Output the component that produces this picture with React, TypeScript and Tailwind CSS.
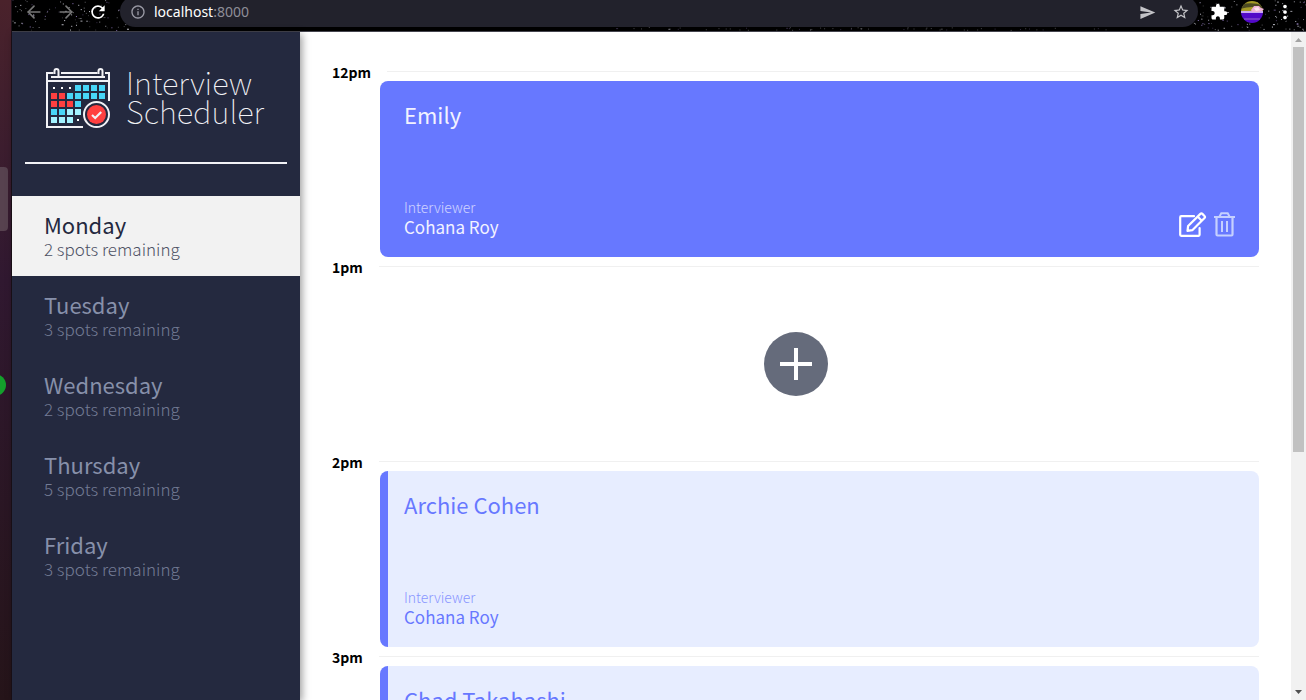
import React from "react";
import { ArrowLeft, ArrowRight } from "lucide-react";
import { MdExtension, MdInfoOutline, MdMoreVert, MdRefresh, MdSend, MdStarBorder } from "react-icons/md";

const DAYS = [
  { name: "Monday", spots: 2 },
  { name: "Tuesday", spots: 3 },
  { name: "Wednesday", spots: 2 },
  { name: "Thursday", spots: 5 },
  { name: "Friday", spots: 3 },
];

type Slot = { time: string; student?: string; interviewer?: string; active?: boolean };

const SLOTS: Slot[] = [
  { time: "12pm", student: "Emily", interviewer: "Cohana Roy", active: true },
  { time: "1pm" },
  { time: "2pm", student: "Archie Cohen", interviewer: "Cohana Roy" },
  { time: "3pm", student: "Chad Takahashi", interviewer: "Cohana Roy" },
];

const STARS = Array.from({ length: 260 }, (_, i) => {
  const a = Math.abs(Math.sin(i * 12.9898) * 43758.5453) % 1;
  const b = Math.abs(Math.sin(i * 78.233) * 12543.123) % 1;
  const x = i < 90 ? a * 115 : i < 200 ? 1180 + a * 114 : 600 + a * 500;
  return { x, y: i < 200 ? b * 30 : 27 + b * 3, o: i < 200 ? 0.15 + ((a * 97) % 1) * 0.75 : 0.3, c: i % 4 === 0 ? "#a58bd8" : "#e8e8f4" };
});

function Toolbar() {
  return (
    <header className="relative flex h-8 shrink-0 items-start border-b border-[#45454f] bg-black">
      <svg className="absolute left-0 top-0 h-full w-full" aria-hidden="true">
        {STARS.map((s, i) => (
          <rect key={i} x={s.x} y={s.y} width={i % 9 === 0 ? 2 : 1} height="1" fill={s.c} opacity={s.o} />
        ))}
      </svg>
      <nav className="relative flex h-6 w-[108px] shrink-0 items-center gap-3 pl-3">
        <button aria-label="Back" className="text-[#777]"><ArrowLeft size={20} /></button>
        <button aria-label="Forward" className="text-[#777]"><ArrowRight size={20} /></button>
        <button aria-label="Reload" className="text-white"><MdRefresh size={20} /></button>
      </nav>
      <div className="relative -mt-1 flex h-[31px] flex-1 items-center rounded-full bg-[#22222c] pl-2.5 pr-2">
        <MdInfoOutline size={16} className="mt-px text-[#9a9aa5]" />
        <a href="#" className="ml-2 flex-1 font-['Noto_Sans',sans-serif] text-[14px] leading-4 text-white">
          localhost<span className="text-[#8e8e98]">:8000</span>
        </a>
        <button aria-label="Send" className="mt-px text-[#c4c4c8]"><MdSend size={17} /></button>
        <button aria-label="Bookmark" className="ml-4 mt-px text-[#c4c4c8]"><MdStarBorder size={18} /></button>
      </div>
      <div className="relative flex h-6 w-[108px] shrink-0 items-center pl-3">
        <button aria-label="Extensions" className="text-white"><MdExtension size={18} /></button>
        <button aria-label="Profile" className="ml-3">
          <svg width="24" height="24" viewBox="0 0 24 24">
            <defs>
              <clipPath id="avatar"><circle cx="12" cy="12" r="11" /></clipPath>
            </defs>
            <g clipPath="url(#avatar)">
              <rect width="24" height="12" fill="#a49a26" />
              <path d="M0 5q12-4 24 1v3q-12-4-24 0z" fill="#4c4a22" />
              <path d="M0 12h24v12H0z" fill="#5209c8" />
              <path d="M0 11h24v2H0z" fill="#c9a9f2" />
              <path d="M4 18h16v2H4z" fill="#7437c9" />
            </g>
            <path d="M11 10l3-4 5 0 2 2 3 1-2 2-4 1-6 0z" fill="#eeb0d8" />
            <path d="M14 8l4-1 2 3-4 1z" fill="#fbe4ee" />
          </svg>
        </button>
        <button aria-label="Menu" className="ml-2.5 text-white"><MdMoreVert size={22} /></button>
      </div>
    </header>
  );
}

const CELLS = ["dddbbbb", "rrbbbbb", "rrrb", "bbll", "llld"];
const CELL_FILL: Record<string, string> = { b: "#48d6f7", r: "#ff4040", l: "#a3f2ff" };

function CalendarLogo() {
  return (
    <svg width="64" height="62" viewBox="0 0 64 62" fill="none" stroke="#f2f2f6" strokeWidth="2" aria-hidden="true">
      <path d="M7.5 6H1v54h36M15 6h36.500M59 6h4v28M5 10h54M1 14h62" />
      <path d="M8.500 7V4a2 2 0 0 1 4 0v6M52.500 7V4a2 2 0 0 1 4 0v6" />
      <g stroke="none">
        {CELLS.flatMap((row, y) =>
          row.split("").map((c, x) =>
            c === "d" ? (
              <rect key={`${x}-${y}`} x={7 + x * 8} y={20 + y * 8} width="2" height="2" fill="#fff" />
            ) : (
              <rect key={`${x}-${y}`} x={5 + x * 8} y={18 + y * 8} width="6" height="6" fill={CELL_FILL[c]} />
            ),
          ),
        )}
      </g>
      <circle cx="50.500" cy="47.500" r="12.500" fill="#24293f" />
      <circle cx="50.500" cy="47.500" r="9.500" fill="#ff4040" stroke="none" />
      <path d="M46 48l3.200 3 6-6" strokeWidth="2.200" />
    </svg>
  );
}

function Sidebar() {
  return (
    <aside className="relative z-10 flex w-72 shrink-0 flex-col bg-[#24293f] shadow-[2px_2px_8px_rgba(0,0,0,0.4)]">
      <div className="flex h-[97px] items-start gap-4 pl-[34px] pt-[35px]">
        <CalendarLogo />
        <h1 className="text-[31px] font-thin leading-[29px] text-[#f2f2f6]">
          Interview
          <br />
          Scheduler
        </h1>
      </div>
      <hr className="mx-[13px] mt-[33px] border-0 border-t-2 border-[#f2f2f6]" />
      <ul className="mt-8">
        {DAYS.map((day, i) => (
          <li key={day.name}>
            <button
              className={
                i === 0
                  ? "flex h-20 w-full flex-col justify-center bg-[#f2f2f2] pl-8 text-left text-[#24293f]"
                  : "flex h-20 w-full flex-col justify-center pl-8 text-left text-[#8790aa]"
              }
            >
              <span className="text-[22px] leading-[26px]">{day.name}</span>
              <span className="text-[17px] font-light leading-6 opacity-80">{day.spots} spots remaining</span>
            </button>
          </li>
        ))}
      </ul>
    </aside>
  );
}

function EditIcon() {
  return (
    <svg width="28" height="25" viewBox="0 0 28 25" fill="none" stroke="currentColor" strokeWidth="2.200" strokeLinejoin="round" strokeLinecap="round">
      <path d="M15 4.200H2.200a1 1 0 0 0-1 1v17.600a1 1 0 0 0 1 1h17.400a1 1 0 0 0 1-1V16" />
      <path d="M8.500 18.800l.6-4.800L21.400 1.900q1-1 2 0l2.100 2.100q1 1 0 2L13.300 18.200zM18.800 4.700l4 4" />
    </svg>
  );
}

function TrashIcon() {
  return (
    <svg width="21" height="25" viewBox="0 0 21 25" fill="none" stroke="currentColor" strokeWidth="2">
      <path d="M0 5h21M5.500 4.500L7.300 1.200h6.400l1.800 3.300" />
      <path d="M2.500 5v17.500q0 1 1 1h14q1 0 1-1V5" strokeWidth="2.200" />
      <path d="M8 9v11M13 9v11" />
    </svg>
  );
}

function Appointment({ slot }: { slot: Slot }) {
  return (
    <article>
      <header className="flex h-[19px] items-center gap-4">
        <h4 className="pt-0.5 text-[14px] font-bold leading-[19px] text-black">{slot.time}</h4>
        <hr className="flex-1 border-t border-[#f0f0f0]" />
      </header>
      {slot.student ? (
        <div
          className={
            slot.active
              ? "ml-12 flex h-44 items-end justify-between rounded-lg bg-[#6778ff] px-6 pb-5 pt-6 text-[#f2f2ff]"
              : "ml-12 flex h-44 items-end justify-between rounded-lg border-l-8 border-[#6778ff] bg-[#e7edff] pb-5 pl-4 pr-6 pt-6 text-[#6778ff]"
          }
        >
          <div className="flex h-full flex-col justify-between">
            <h2 className="text-[22px] leading-[18px]">{slot.student}</h2>
            <div>
              <h4 className="text-[14px] font-light leading-5 opacity-75">Interviewer</h4>
              <h3 className="text-[17px] leading-5">{slot.interviewer}</h3>
            </div>
          </div>
          {slot.active && (
            <div className="flex gap-[7px]">
              <button aria-label="Edit" className="text-white"><EditIcon /></button>
              <button aria-label="Delete" className="text-[#c5d0ff]"><TrashIcon /></button>
            </div>
          )}
        </div>
      ) : (
        <div className="flex h-44 items-center justify-center">
          <button aria-label="Add" className="flex size-16 items-center justify-center rounded-full bg-[#656b7b] text-white">
            <svg width="32" height="32" viewBox="0 0 32 32" fill="none" stroke="currentColor" strokeWidth="4" strokeLinecap="butt">
              <path d="M0 16h32M16 0v32" />
            </svg>
          </button>
        </div>
      )}
    </article>
  );
}

function ScrollTrack() {
  return (
    <div className="flex w-[15px] shrink-0 flex-col items-center justify-between bg-[#f1f1f1]" aria-hidden="true">
      <div className="flex w-full flex-1 flex-col items-center">
        <svg width="15" height="15" viewBox="0 0 15 15"><path d="M4 10l3.500-4L11 10z" fill="#a3a3a3" /></svg>
        <div className="h-[62%] w-[11px] bg-[#c1c1c1]" />
      </div>
      <svg width="15" height="15" viewBox="0 0 15 15"><path d="M4 5h7L7.500 9z" fill="#505050" /></svg>
    </div>
  );
}

function DesktopEdge() {
  return (
    <div className="flex w-3 shrink-0 flex-col overflow-hidden border-r border-[#1c1018] bg-linear-to-b from-[#4a222b] via-[#301830] via-40% to-[#251419]" aria-hidden="true">
      <div className="mt-[167px] h-16 w-2 rounded-r bg-[#57424f]" />
      <div className="-ml-4 mt-[143px] size-[22px] rounded-full bg-[#14a02c]" />
    </div>
  );
}

export default function App() {
  return (
    <div className="flex h-screen overflow-hidden bg-black font-['Noto_Sans_CJK_SC','Noto_Sans',sans-serif]">
      <DesktopEdge />
      <div className="flex min-w-0 flex-1 flex-col">
        <Toolbar />
        <div className="flex min-h-0 flex-1 bg-white">
          <Sidebar />
          <main className="min-w-0 flex-1 overflow-hidden px-8 pt-[30px]">
            {SLOTS.map((slot) => (
              <Appointment key={slot.time} slot={slot} />
            ))}
          </main>
          <ScrollTrack />
        </div>
      </div>
    </div>
  );
}
